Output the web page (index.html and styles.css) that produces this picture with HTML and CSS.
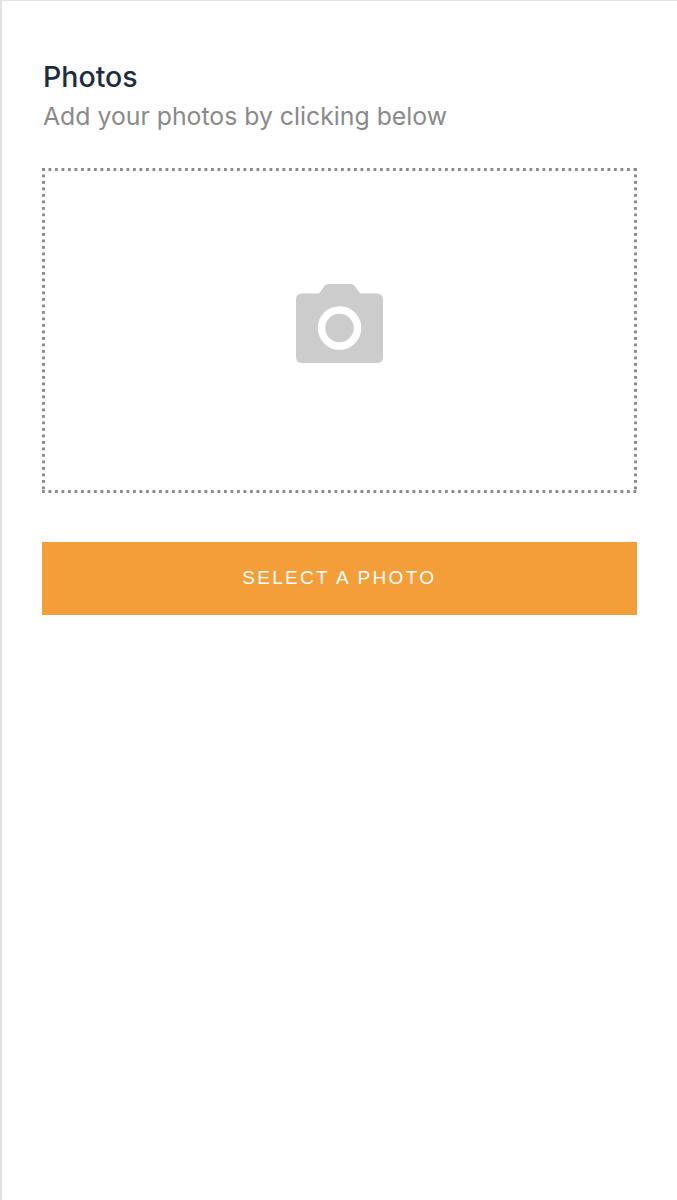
FILE: index.html
```html
<!DOCTYPE html>
<html lang="en">
<head>
    <meta charset="UTF-8">
    <meta name="viewport" content="width=device-width, initial-scale=1.0">
    <title>Photos</title>
    <link rel="stylesheet" href="styles.css">
</head>
<body>
    <div class="page">
        <div class="section-header">
            <h1>Photos</h1>
            <p>Add your photos by clicking below</p>
        </div>

        <div class="photo-box">
            <svg class="camera-icon" width="87" height="79" viewBox="0 0 87 79" aria-hidden="true">
                <path fill="#cccccc" d="M6 9.500H23L28.500 2Q30 0 32.500 0H54.500Q57 0 58.500 2L64.500 9.500H81Q87 9.500 87 15.500V73Q87 79 81 79H6Q0 79 0 73V15.500Q0 9.500 6 9.500Z"/>
                <circle cx="43.500" cy="44" r="18" fill="none" stroke="#ffffff" stroke-width="7.500"/>
            </svg>
        </div>

        <button class="select-button">SELECT A PHOTO</button>
    </div>
</body>
</html>
```

FILE: styles.css
```css
* {
    margin: 0;
    padding: 0;
    box-sizing: border-box;
}

body {
    font-family: 'Inter', 'Liberation Sans', sans-serif;
    background: #ffffff;
    color: #333;
    min-height: 100vh;
}

.page {
    min-height: 1200px;
    border-top: 1px solid #e2e2e2;
    border-left: 2px solid #e2e2e2;
    padding: 59px 40.500px 0 40px;
}

.section-header {
    padding-left: 1px;
}

.section-header h1 {
    color: #1c2d3f;
    font-size: 28.500px;
    font-weight: 500;
    line-height: 34px;
}

.section-header p {
    color: #8a8a8a;
    font-size: 24.800px;
    line-height: 44px;
    white-space: nowrap;
}

/* square dots, the plain dotted border draws them round */
.photo-box {
    margin-top: 30px;
    height: 325px;
    padding-bottom: 14px;
    background-image:
        linear-gradient(to right, #8a8a8a 3px, transparent 3px),
        linear-gradient(to right, #8a8a8a 3px, transparent 3px),
        linear-gradient(to bottom, #8a8a8a 3px, transparent 3px),
        linear-gradient(to bottom, #8a8a8a 3px, transparent 3px);
    background-size: 6.500px 3px, 6.500px 3px, 3px 6.500px, 3px 6.500px;
    background-position: left top, left bottom, left top, right top;
    background-repeat: repeat-x, repeat-x, repeat-y, repeat-y;
    display: flex;
    align-items: center;
    justify-content: center;
}

.select-button {
    display: block;
    width: 100%;
    height: 73px;
    margin-top: 49px;
    padding-bottom: 2px;
    background: #f49e39;
    color: #ffffff;
    border: none;
    font-family: 'Liberation Sans', Arial, sans-serif;
    font-size: 19px;
    letter-spacing: 2.300px;
}
```
